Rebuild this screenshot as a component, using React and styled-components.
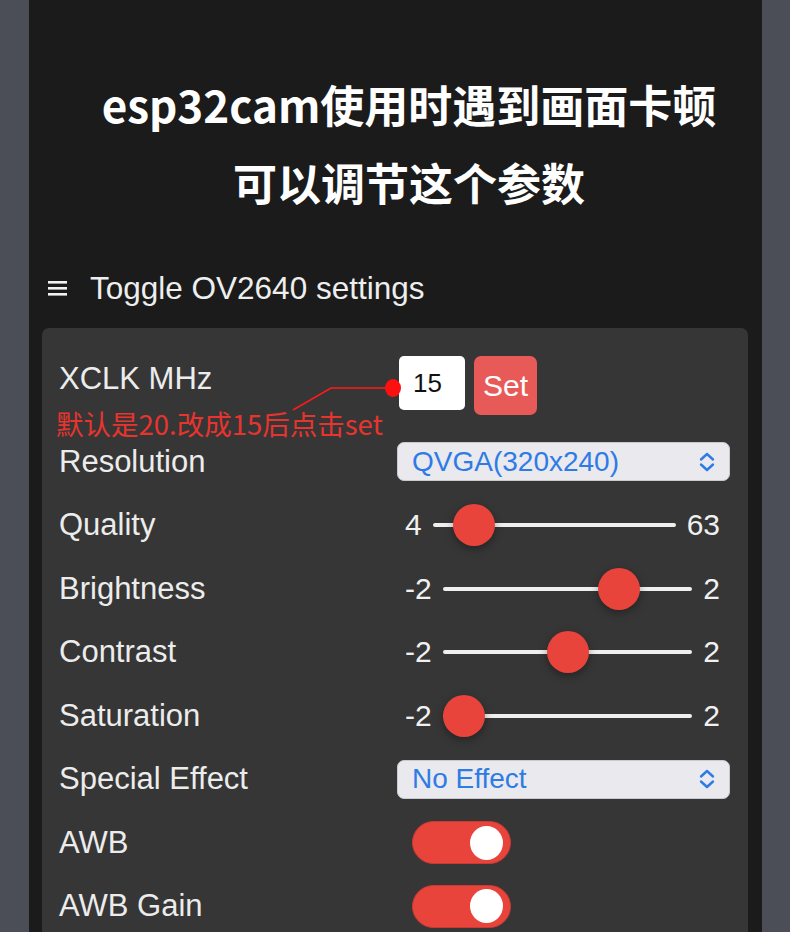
import React from "react";
import styled, { createGlobalStyle } from "styled-components";

const GlobalStyle = createGlobalStyle`
  html, body {
    margin: 0;
    padding: 0;
    background: #4b4e56;
  }
  body {
    font-family: "Liberation Sans", Arial, sans-serif;
  }
`;

const sliders = [
  { label: "Quality", min: 4, max: 63, value: 10 },
  { label: "Brightness", min: -2, max: 2, value: 1 },
  { label: "Contrast", min: -2, max: 2, value: 0 },
  { label: "Saturation", min: -2, max: 2, value: -2 },
];

function ChevronsIcon() {
  return (
    <svg width="18" height="22" viewBox="0 0 18 22" fill="none">
      <path d="M3 8.5 L9 3 L15 8.5" stroke="#2f7be6" strokeWidth="2.4" strokeLinecap="round" strokeLinejoin="round" />
      <path d="M3 13.5 L9 19 L15 13.5" stroke="#2f7be6" strokeWidth="2.4" strokeLinecap="round" strokeLinejoin="round" />
    </svg>
  );
}

function MenuIcon() {
  return (
    <svg width="19" height="16" viewBox="0 0 19 16">
      <rect x="0" y="1" width="19" height="2.6" fill="#f2f2f2" />
      <rect x="0" y="7" width="19" height="2.6" fill="#f2f2f2" />
      <rect x="0" y="13" width="19" height="2.6" fill="#f2f2f2" />
    </svg>
  );
}

function Slider({ min, max, value }) {
  const frac = (value - min) / (max - min);
  return (
    <SliderWrap>
      <RangeValue>{min}</RangeValue>
      <Track>
        <Thumb style={{ left: `calc(${frac} * (100% - 42px))` }} />
      </Track>
      <RangeValue>{max}</RangeValue>
    </SliderWrap>
  );
}

function Select({ text }) {
  return (
    <SelectBox>
      <span>{text}</span>
      <ChevronsIcon />
    </SelectBox>
  );
}

export default function App() {
  return (
    <>
      <GlobalStyle />
      <Page>
        <TitleBlock>
          <TitleLine>esp32cam使用时遇到画面卡顿</TitleLine>
          <TitleLine>可以调节这个参数</TitleLine>
        </TitleBlock>

        <Header>
          <MenuIcon />
          <HeaderText>Toggle OV2640 settings</HeaderText>
        </Header>

        <Panel>
          <XclkRow>
            <Label>XCLK MHz</Label>
            <XclkControls>
              <NumberBox>15</NumberBox>
              <SetButton>Set</SetButton>
            </XclkControls>
            <Note>
              <NoteLine width="112" height="40" viewBox="0 0 112 40">
                <polyline points="3,33 41,11 104,11" fill="none" stroke="#ff1a1a" strokeWidth="1.6" />
                <ellipse cx="103" cy="11" rx="8" ry="9" fill="#ff1010" />
              </NoteLine>
              <NoteText>默认是20.改成15后点击set</NoteText>
            </Note>
          </XclkRow>

          <Row>
            <Label>Resolution</Label>
            <Select text="QVGA(320x240)" />
          </Row>

          {sliders.map(s => (
            <Row key={s.label}>
              <Label>{s.label}</Label>
              <Slider min={s.min} max={s.max} value={s.value} />
            </Row>
          ))}

          <Row>
            <Label>Special Effect</Label>
            <Select text="No Effect" />
          </Row>

          <Row>
            <Label>AWB</Label>
            <Toggle>
              <Knob />
            </Toggle>
          </Row>

          <Row>
            <Label>AWB Gain</Label>
            <Toggle>
              <Knob />
            </Toggle>
          </Row>
        </Panel>
      </Page>
    </>
  );
}

const Page = styled.div`
  width: 733px;
  height: 932px;
  margin: 0 0 0 29px;
  background: #1b1b1b;
  padding: 0 14px 0 13px;
  box-sizing: border-box;
  overflow: hidden;
`;

const TitleBlock = styled.div`
  padding: 74px 0 0 28px;
  display: flex;
  flex-direction: column;
  align-items: center;
  gap: 18px;
`;

const TitleLine = styled.div`
  font-family: "Noto Sans CJK SC", sans-serif;
  font-weight: 700;
  font-size: 44px;
  line-height: 60px;
  color: #ffffff;
  white-space: nowrap;
`;

const Header = styled.div`
  margin-top: 52px;
  height: 48px;
  display: flex;
  align-items: center;
  gap: 23px;
  padding-left: 6px;
`;

const HeaderText = styled.span`
  font-size: 31.5px;
  color: #eeeeee;
`;

const Panel = styled.div`
  margin-top: 16px;
  background: #363636;
  border-radius: 7px;
  padding: 15px 18px 20px 17px;
  min-height: 700px;
`;

const Row = styled.div`
  display: grid;
  grid-template-columns: 338px 1fr;
  align-items: center;
  height: 63.5px;
`;

const XclkRow = styled(Row)`
  position: relative;
  margin-bottom: 23.5px;
`;

const Label = styled.div`
  font-size: 31px;
  color: #ececec;
  white-space: nowrap;
`;

const XclkControls = styled.div`
  display: flex;
  align-items: flex-start;
  gap: 9px;
  padding: 13px 0 0 2px;
`;

const NumberBox = styled.div`
  width: 66px;
  height: 54px;
  box-sizing: border-box;
  background: #ffffff;
  border-radius: 5px;
  color: #111111;
  font-size: 26px;
  padding: 12px 0 0 14px;
`;

const SetButton = styled.div`
  width: 63px;
  height: 59px;
  border-radius: 7px;
  background: #e85a58;
  color: #ffffff;
  font-size: 30px;
  display: flex;
  align-items: center;
  justify-content: center;
`;

const Note = styled.div`
  position: absolute;
  left: -3px;
  top: 25px;
  width: 350px;
  height: 90px;
`;

const NoteLine = styled.svg`
  position: absolute;
  left: 234px;
  top: 9px;
`;

const NoteText = styled.div`
  position: absolute;
  left: 0;
  top: 38px;
  font-family: "Noto Sans CJK SC", sans-serif;
  font-size: 27.5px;
  line-height: 34px;
  color: #e8342f;
  white-space: nowrap;
`;

const SelectBox = styled.div`
  height: 39px;
  box-sizing: border-box;
  background: #e9e9ee;
  border: 1px solid #c9c9cf;
  border-radius: 7px;
  display: flex;
  align-items: center;
  justify-content: space-between;
  padding: 0 13px 0 14px;
  color: #2f7be6;
  font-size: 28px;
`;

const SliderWrap = styled.div`
  display: flex;
  align-items: center;
  gap: 11px;
  padding: 0 10px 0 8px;
`;

const RangeValue = styled.span`
  font-size: 30px;
  color: #f0f0f0;
`;

const Track = styled.div`
  position: relative;
  flex: 1;
  height: 4px;
  border-radius: 2px;
  background: #efefef;
`;

const Thumb = styled.div`
  position: absolute;
  top: -19px;
  width: 42px;
  height: 42px;
  border-radius: 50%;
  background: #e8443c;
  box-shadow: 0 3px 8px rgba(0, 0, 0, 0.35);
`;

const Toggle = styled.div`
  margin-left: 15px;
  width: 99px;
  height: 43px;
  box-sizing: border-box;
  border-radius: 22px;
  background: #e8443c;
  border: 1px solid #c93a33;
  display: flex;
  align-items: center;
  justify-content: flex-end;
  padding-right: 7px;
`;

const Knob = styled.div`
  width: 33px;
  height: 34px;
  border-radius: 50%;
  background: #ffffff;
`;
